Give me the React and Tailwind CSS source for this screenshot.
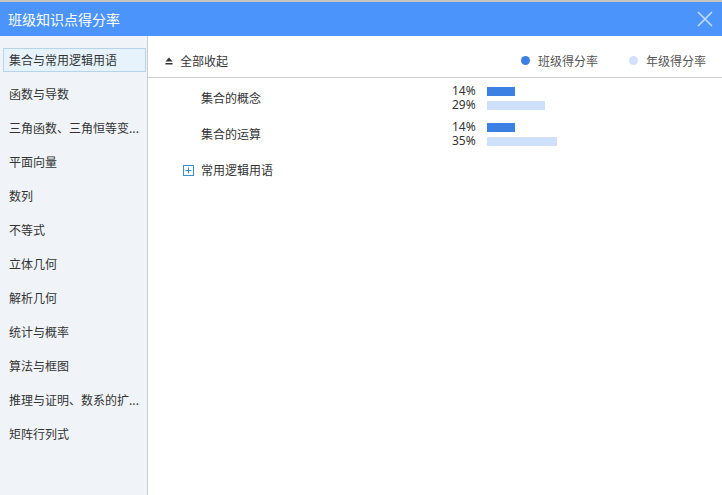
import React from "react";

const items = [
  "集合与常用逻辑用语",
  "函数与导数",
  "三角函数、三角恒等变...",
  "平面向量",
  "数列",
  "不等式",
  "立体几何",
  "解析几何",
  "统计与概率",
  "算法与框图",
  "推理与证明、数系的扩...",
  "矩阵行列式",
];

const rows = [
  { name: "集合的概念", a: 14, b: 29 },
  { name: "集合的运算", a: 14, b: 35 },
];

export default function App() {
  return (
    <div
      className="w-[722px] h-[495px] overflow-hidden flex flex-col bg-white text-[#333]"
      style={{ fontFamily: '"Noto Sans CJK SC", "Noto Sans", sans-serif' }}
    >
      <div className="h-[2px] bg-[#c9c6c2] shrink-0" />
      <div className="h-[34px] shrink-0 bg-[#4b94fb] flex items-center justify-between pl-[8px] pr-[9px]">
        <span className="text-white text-[14px] leading-none">班级知识点得分率</span>
        <svg width="16" height="16" viewBox="0 0 16 16" className="text-[#c4dcff]">
          <path d="M1 1 L15 15 M15 1 L1 15" stroke="currentColor" strokeWidth="1.6" fill="none" />
        </svg>
      </div>
      <div className="flex flex-1 min-h-0">
        <div className="w-[148px] shrink-0 bg-[#f0f4f8] border-r border-[#c9ccd0] pt-[12px] pl-[3px] pr-[1px] flex flex-col gap-[10px]">
          {items.map((t, i) => (
            <div
              key={i}
              className={
                "h-[24px] flex items-center pl-[5px] text-[12px] whitespace-nowrap text-[#333] " +
                (i === 0 ? "bg-[#e6f3fd] border border-[#b6d3ea]" : "border border-transparent")
              }
            >
              {t}
            </div>
          ))}
        </div>
        <div className="flex-1 flex flex-col">
          <div className="h-[34px] mt-[8px] border-b border-[#cfcfcf] flex items-center pl-[17px] pr-[16px] text-[12px]">
            <svg width="8" height="8" viewBox="0 0 8 8" className="mr-[7px]">
              <path d="M4 0.5 L7.5 4.5 L0.5 4.5 Z" fill="#333" />
              <rect x="0.5" y="6" width="7" height="1.5" fill="#333" />
            </svg>
            <span>全部收起</span>
            <div className="ml-auto flex items-center">
              <span className="w-[9px] h-[9px] rounded-full bg-[#3b80e2] mr-[8px]" />
              <span className="text-[#555]">班级得分率</span>
              <span className="w-[9px] h-[9px] rounded-full bg-[#d2e1f9] ml-[31px] mr-[8px]" />
              <span className="text-[#555]">年级得分率</span>
            </div>
          </div>
          <div className="pt-[6px] flex flex-col gap-[8px]">
            {rows.map((r, i) => (
              <div key={i} className="flex items-center h-[28px]">
                <span className="pl-[53px] w-[304px] text-[12px]">{r.name}</span>
                <div className="flex flex-col gap-[1px]">
                  <div className="flex items-center h-[13px]">
                    <span className="w-[35px] text-[12px] leading-[12px] text-[#333]" style={{ fontFamily: '"Noto Sans", sans-serif' }}>{r.a}%</span>
                    <div className="h-[9px] bg-[#3b80e2]" style={{ width: r.a * 2 }} />
                  </div>
                  <div className="flex items-center h-[13px]">
                    <span className="w-[35px] text-[12px] leading-[12px] text-[#333]" style={{ fontFamily: '"Noto Sans", sans-serif' }}>{r.b}%</span>
                    <div className="h-[9px] bg-[#cfe0fa]" style={{ width: r.b * 2 }} />
                  </div>
                </div>
              </div>
            ))}
            <div className="flex items-center h-[20px] mt-[4px] pl-[35px] text-[12px]">
              <svg width="11" height="11" viewBox="0 0 11 11" className="mr-[7px]">
                <rect x="0.5" y="0.5" width="10" height="10" fill="none" stroke="#3b8fd0" strokeWidth="1" />
                <path d="M5.5 2.5 V8.5 M2.5 5.5 H8.5" stroke="#3b8fd0" strokeWidth="1" />
              </svg>
              <span>常用逻辑用语</span>
            </div>
          </div>
        </div>
      </div>
    </div>
  );
}
